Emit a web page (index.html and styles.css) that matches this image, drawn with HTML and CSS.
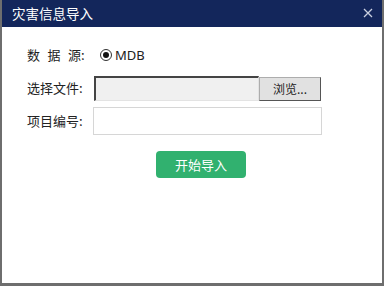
FILE: index.html
```html
<!DOCTYPE html>
<html lang="zh">
<head>
<meta charset="utf-8">
<link rel="stylesheet" href="styles.css">
</head>
<body>
<div class="dialog">
  <div class="titlebar">
    <span class="title">灾害信息导入</span>
    <svg class="close" width="10" height="10" viewBox="0 0 10 10"><path d="M1 1L9 9M9 1L1 9" stroke="#c9cfe0" stroke-width="1.3" fill="none"/></svg>
  </div>
  <div class="body">
    <div class="row r1">
      <span class="label"><span class="spaced">数据</span>源:</span>
      <span class="radio"><span class="dot"></span></span>
      <span class="mdb">MDB</span>
    </div>
    <div class="row r2">
      <span class="label">选择文件:</span>
      <span class="file"></span>
      <span class="browse">浏览...</span>
    </div>
    <div class="row r3">
      <span class="label">项目编号:</span>
      <span class="text"></span>
    </div>
    <div class="actions">
      <span class="go">开始导入</span>
    </div>
  </div>
</div>
</body>
</html>
```
FILE: styles.css
```css
html, body {
  margin: 0;
  padding: 0;
  background: #6e6e6e;
  width: 384px;
  height: 286px;
  overflow: hidden;
  font-family: "Noto Sans CJK SC", "Noto Sans", sans-serif;
}
.dialog {
  margin-left: 2px;
  width: 380px;
  height: 283px;
  background: #ffffff;
  display: flex;
  flex-direction: column;
}
.titlebar {
  height: 27px;
  background: #13265b;
  display: flex;
  align-items: center;
  justify-content: space-between;
  padding: 0 9px 0 10px;
}
.title {
  color: #ffffff;
  font-size: 13.5px;
  line-height: 27px;
}
.close { display: block; margin-top: -1px; }
.body {
  padding: 13px 0 0 25px;
  font-size: 13px;
  color: #222;
}
.row {
  display: flex;
  align-items: center;
}
.label {
  width: 66px;
  white-space: pre;
  line-height: 18px;
}
.spaced { letter-spacing: 7.5px; }
.r1 { height: 28px; margin-top: 1px; }
.radio {
  width: 10px;
  height: 10px;
  border: 1px solid #333;
  border-radius: 50%;
  display: flex;
  align-items: center;
  justify-content: center;
  margin-left: 7px;
  margin-right: 3px;
}
.dot {
  width: 6px;
  height: 6px;
  border-radius: 50%;
  background: #111;
}
.mdb {
  font-family: "Noto Sans", sans-serif;
  font-size: 13px;
}
.r2 { margin-top: 6px; height: 26px; }
.file {
  width: 162px;
  height: 22px;
  background: #f0f0f0;
  border-top: 2px solid #444;
  border-left: 2px solid #444;
  border-right: 1px solid #e3e3e3;
  border-bottom: 1px solid #e3e3e3;
  box-sizing: content-box;
  margin-left: 1px;
}
.browse {
  width: 62px;
  height: 24px;
  box-sizing: border-box;
  background: #e1e1e1;
  border: 1px solid #adadad;
  border-right-color: #555;
  border-bottom-color: #555;
  font-size: 12px;
  text-align: center;
  line-height: 22px;
  margin-top: 1px;
}
.r3 { margin-top: 6px; }
.text {
  width: 227px;
  height: 26px;
  border: 1px solid #d6d6d6;
}
.actions {
  display: flex;
  justify-content: flex-start;
  padding-left: 129px;
  margin-top: 16px;
}
.go {
  width: 90px;
  height: 27px;
  background: #31b16f;
  border-radius: 4px;
  color: #fff;
  font-size: 13px;
  line-height: 27px;
  text-align: center;
}
```
